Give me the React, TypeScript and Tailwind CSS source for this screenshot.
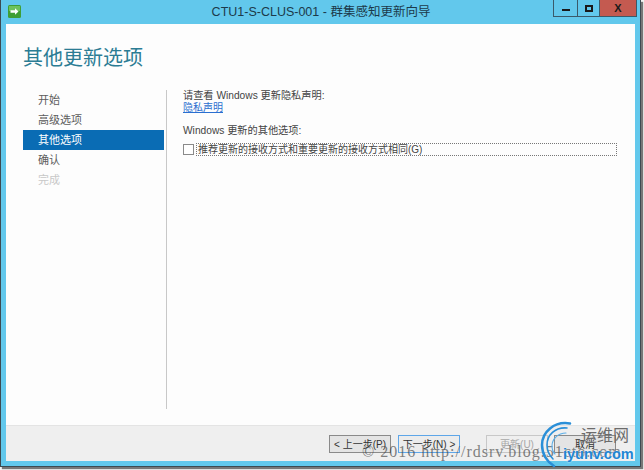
const cjk = "font-['Liberation_Sans','Noto_Sans_CJK_SC',sans-serif]";

function WizardIcon() {
  return (
    <svg width="13" height="13" viewBox="0 0 13 13" className="shrink-0">
      <rect x="0" y="0" width="13" height="13" rx="1.5" fill="#3f9e35" />
      <rect x="1" y="1" width="11" height="5" fill="#6cc25c" />
      <path d="M2.5 5.2H7V3.2L10.5 6.5L7 9.8V7.8H2.5Z" fill="#ffffff" />
    </svg>
  );
}

function NavItem({ label, active, disabled }: { label: string; active?: boolean; disabled?: boolean }) {
  return (
    <div
      className={`h-5 pl-[15px] text-[11px] leading-5 ${
        active ? 'bg-[#0a6cb4] text-white' : disabled ? 'text-[#c8c8c8]' : 'text-[#5c5c5c]'
      }`}
    >
      {label}
    </div>
  );
}

function WizardButton({ label, focused, disabled, className }: { label: string; focused?: boolean; disabled?: boolean; className?: string }) {
  return (
    <div
      className={`flex h-[18px] w-[62px] items-center justify-center border text-[10px] ${
        focused
          ? 'border-[#5ea6e8] bg-[#ececec] text-[#333]'
          : disabled
            ? 'border-[#c8c8c8] bg-[#efefef] text-[#a8a8a8]'
            : 'border-[#8a8a8a] bg-[#e4e4e4] text-[#333]'
      } ${className ?? ''}`}
    >
      {label}
    </div>
  );
}

export default function App() {
  return (
    <div className={`relative h-[470px] w-[644px] overflow-hidden bg-[#f4f4f4] ${cjk}`}>
      <div className="h-[467px] w-[641px] border-b border-l border-r border-[#3c4a52] bg-[#62c8ec] shadow-[2px_2px_1px_#777]">
        <div className="flex h-6 items-center">
          <div className="ml-[7px] mt-[-1px]">
            <WizardIcon />
          </div>
          <div className="flex-1 pl-[68px] pt-px text-center text-[12.5px] text-[#1c3a4a]">
            CTU1-S-CLUS-001 - 群集感知更新向导
          </div>
          <div className="mr-[3px] flex h-[17px] self-start">
            <div className="flex w-[24px] items-end justify-center border-b border-l border-[#3a5a6a] pb-[5px]">
              <div className="h-[2px] w-[8px] bg-[#1a1a1a]" />
            </div>
            <div className="flex w-[22px] items-center justify-center border-b border-l border-[#3a5a6a]">
              <div className="h-[7px] w-[8px] border-2 border-[#1a1a1a]" />
            </div>
            <div className="flex w-[38px] items-center justify-center border-b border-l border-r border-[#3a5a6a] bg-[#c45a50] text-[11px] font-bold text-[#1a1a1a]">
              X
            </div>
          </div>
        </div>
        <div className="mx-[5px] flex h-[437px] flex-col bg-white">
          <div className="flex min-h-0 flex-1 flex-col bg-[#fdfdfd]">
            <h1 className="pl-[17px] pt-[21px] text-[20px] leading-[27px] text-[#2b7c94]">其他更新选项</h1>
            <div className="mt-[18px] flex flex-1 pb-[16px]">
              <div className="w-[158px] pl-[17px]">
                <NavItem label="开始" />
                <NavItem label="高级选项" />
                <NavItem label="其他选项" active />
                <NavItem label="确认" />
                <NavItem label="完成" disabled />
              </div>
              <div className="ml-[2px] w-px bg-[#c8c8c8]" />
              <div className="flex-1 pl-[16px] text-[10.2px] text-[#444]">
                <p className="mt-[-1px] leading-[14px]">请查看 Windows 更新隐私声明:</p>
                <p className="mt-[-1px] text-[10px] leading-[12px] text-[#2a6fd0] underline">隐私声明</p>
                <p className="mt-[10px] leading-[14px]">Windows 更新的其他选项:</p>
                <div className="mt-[5px] flex items-center">
                  <div className="h-[11px] w-[11px] border border-[#8a8a8a] bg-white" />
                  <div className="ml-[2px] h-[13px] w-[421px] border border-dotted border-[#777] pl-[1px] text-[10px] leading-[11px] text-[#444]">
                    推荐更新的接收方式和重要更新的接收方式相同(G)
                  </div>
                </div>
              </div>
            </div>
          </div>
          <div className="flex h-[36px] items-center border-t border-[#e4e4e4] bg-[#efefef] pb-[1px] pl-[323px] pt-[2px]">
            <WizardButton label="< 上一步(P)" />
            <WizardButton label="下一步(N) >" focused className="ml-[7px]" />
            <WizardButton label="更新(U)" disabled className="ml-[26px]" />
            <WizardButton label="取消" className="ml-[6px]" />
          </div>
        </div>
      </div>

      {/* watermark */}
      <div className="absolute left-[362px] top-[443px] whitespace-nowrap font-['Liberation_Serif',serif] text-[16px] leading-[18px] tracking-[1px] text-[#444444aa]">
        © 2016 http://rdsrv.blog.51cto.com
      </div>
      <svg width="40" height="48" viewBox="0 0 40 48" fill="none" className="absolute left-[540px] top-[421px]">
        <path d="M30 2.5C14 0 2 11 2 24C2 33 7 41 14 45" stroke="#2a8fd8" strokeWidth="2.5" strokeLinecap="round" />
        <path d="M27 7C15 6 7 14 7 24C7 30 10 35 13 38" stroke="#2a8fd8" strokeWidth="1.6" strokeLinecap="round" />
        <path d="M26 12C18 12 12 18 12 25C12 28 13 31 15 33" stroke="#5aaee8" strokeWidth="1.1" strokeLinecap="round" />
      </svg>
      <div className="absolute left-[581px] top-[427px] text-[16px] leading-[18px] text-[#6b6b6b]">运维网</div>
      <div className="absolute left-[563px] top-[446px] text-[14.5px] font-bold leading-[16px] text-[#1f86d4] [text-shadow:0_0_2px_#fff]">iyunv.com</div>
    </div>
  );
}
